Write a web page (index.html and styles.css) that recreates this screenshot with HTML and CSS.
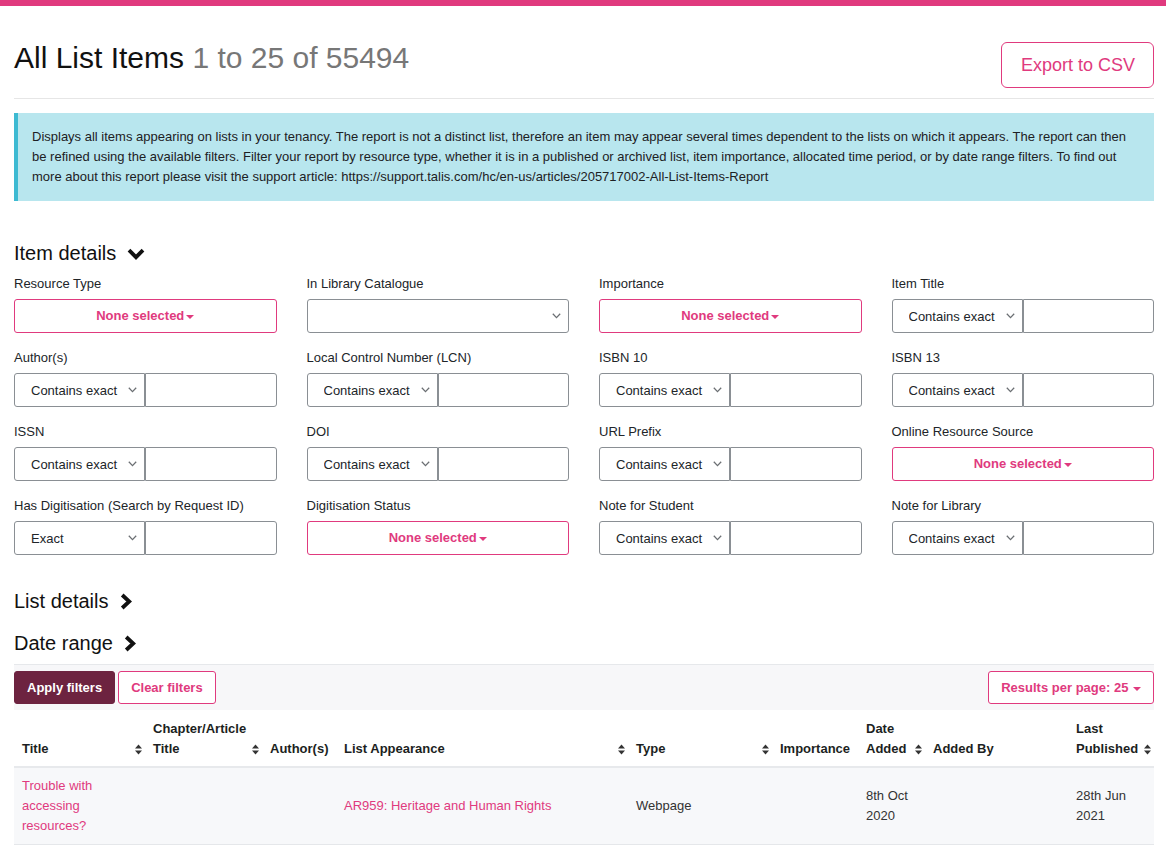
FILE: index.html
```html
<!DOCTYPE html>
<html lang="en">
<head>
<meta charset="utf-8">
<title>All List Items</title>
<link rel="stylesheet" href="styles.css">
</head>
<body>
<div class="topbar"></div>
<main class="container">
  <header class="page-header">
    <h1 class="page-title">All List Items <span class="count">1 to 25 of 55494</span></h1>
    <button class="btn-export" type="button">Export to CSV</button>
  </header>
  <hr class="rule">
  <div class="info">Displays all items appearing on lists in your tenancy. The report is not a distinct list, therefore an item may appear several times dependent to the lists on which it appears. The report can then be refined using the available filters. Filter your report by resource type, whether it is in a published or archived list, item importance, allocated time period, or by date range filters. To find out more about this report please visit the support article: https://support.talis.com/hc/en-us/articles/205717002-All-List-Items-Report</div>

  <h2 class="section-title section-first">Item details
    <svg class="chev-down" width="18" height="12" viewBox="0 0 18 12"><path d="M2 2.2 L9 9.2 L16 2.2" fill="none" stroke="#111" stroke-width="3.8"/></svg>
  </h2>

  <div class="filter-grid">
    <div class="field">
      <label class="field-label">Resource Type</label>
      <button class="multi" type="button">None selected<span class="caret"></span></button>
    </div>
    <div class="field">
      <label class="field-label">In Library Catalogue</label>
      <span class="select-wrap select-wrap-full">
        <select class="select select-full"><option></option></select>
        <svg class="select-arrow" width="9" height="6" viewBox="0 0 9 6"><path d="M0.8 0.8 L4.5 4.6 L8.2 0.8" fill="none" stroke="#6b6f73" stroke-width="1.3"/></svg>
      </span>
    </div>
    <div class="field">
      <label class="field-label">Importance</label>
      <button class="multi" type="button">None selected<span class="caret"></span></button>
    </div>
    <div class="field">
      <label class="field-label">Item Title</label>
      <div class="pair">
        <span class="select-wrap"><select class="select"><option>Contains exact</option></select><svg class="select-arrow" width="9" height="6" viewBox="0 0 9 6"><path d="M0.8 0.8 L4.5 4.6 L8.2 0.8" fill="none" stroke="#6b6f73" stroke-width="1.3"/></svg></span>
        <input class="text-input" type="text">
      </div>
    </div>

    <div class="field">
      <label class="field-label">Author(s)</label>
      <div class="pair">
        <span class="select-wrap"><select class="select"><option>Contains exact</option></select><svg class="select-arrow" width="9" height="6" viewBox="0 0 9 6"><path d="M0.8 0.8 L4.5 4.6 L8.2 0.8" fill="none" stroke="#6b6f73" stroke-width="1.3"/></svg></span>
        <input class="text-input" type="text">
      </div>
    </div>
    <div class="field">
      <label class="field-label">Local Control Number (LCN)</label>
      <div class="pair">
        <span class="select-wrap"><select class="select"><option>Contains exact</option></select><svg class="select-arrow" width="9" height="6" viewBox="0 0 9 6"><path d="M0.8 0.8 L4.5 4.6 L8.2 0.8" fill="none" stroke="#6b6f73" stroke-width="1.3"/></svg></span>
        <input class="text-input" type="text">
      </div>
    </div>
    <div class="field">
      <label class="field-label">ISBN 10</label>
      <div class="pair">
        <span class="select-wrap"><select class="select"><option>Contains exact</option></select><svg class="select-arrow" width="9" height="6" viewBox="0 0 9 6"><path d="M0.8 0.8 L4.5 4.6 L8.2 0.8" fill="none" stroke="#6b6f73" stroke-width="1.3"/></svg></span>
        <input class="text-input" type="text">
      </div>
    </div>
    <div class="field">
      <label class="field-label">ISBN 13</label>
      <div class="pair">
        <span class="select-wrap"><select class="select"><option>Contains exact</option></select><svg class="select-arrow" width="9" height="6" viewBox="0 0 9 6"><path d="M0.8 0.8 L4.5 4.6 L8.2 0.8" fill="none" stroke="#6b6f73" stroke-width="1.3"/></svg></span>
        <input class="text-input" type="text">
      </div>
    </div>

    <div class="field">
      <label class="field-label">ISSN</label>
      <div class="pair">
        <span class="select-wrap"><select class="select"><option>Contains exact</option></select><svg class="select-arrow" width="9" height="6" viewBox="0 0 9 6"><path d="M0.8 0.8 L4.5 4.6 L8.2 0.8" fill="none" stroke="#6b6f73" stroke-width="1.3"/></svg></span>
        <input class="text-input" type="text">
      </div>
    </div>
    <div class="field">
      <label class="field-label">DOI</label>
      <div class="pair">
        <span class="select-wrap"><select class="select"><option>Contains exact</option></select><svg class="select-arrow" width="9" height="6" viewBox="0 0 9 6"><path d="M0.8 0.8 L4.5 4.6 L8.2 0.8" fill="none" stroke="#6b6f73" stroke-width="1.3"/></svg></span>
        <input class="text-input" type="text">
      </div>
    </div>
    <div class="field">
      <label class="field-label">URL Prefix</label>
      <div class="pair">
        <span class="select-wrap"><select class="select"><option>Contains exact</option></select><svg class="select-arrow" width="9" height="6" viewBox="0 0 9 6"><path d="M0.8 0.8 L4.5 4.6 L8.2 0.8" fill="none" stroke="#6b6f73" stroke-width="1.3"/></svg></span>
        <input class="text-input" type="text">
      </div>
    </div>
    <div class="field">
      <label class="field-label">Online Resource Source</label>
      <button class="multi" type="button">None selected<span class="caret"></span></button>
    </div>

    <div class="field">
      <label class="field-label">Has Digitisation (Search by Request ID)</label>
      <div class="pair">
        <span class="select-wrap"><select class="select"><option>Exact</option></select><svg class="select-arrow" width="9" height="6" viewBox="0 0 9 6"><path d="M0.8 0.8 L4.5 4.6 L8.2 0.8" fill="none" stroke="#6b6f73" stroke-width="1.3"/></svg></span>
        <input class="text-input" type="text">
      </div>
    </div>
    <div class="field">
      <label class="field-label">Digitisation Status</label>
      <button class="multi" type="button">None selected<span class="caret"></span></button>
    </div>
    <div class="field">
      <label class="field-label">Note for Student</label>
      <div class="pair">
        <span class="select-wrap"><select class="select"><option>Contains exact</option></select><svg class="select-arrow" width="9" height="6" viewBox="0 0 9 6"><path d="M0.8 0.8 L4.5 4.6 L8.2 0.8" fill="none" stroke="#6b6f73" stroke-width="1.3"/></svg></span>
        <input class="text-input" type="text">
      </div>
    </div>
    <div class="field">
      <label class="field-label">Note for Library</label>
      <div class="pair">
        <span class="select-wrap"><select class="select"><option>Contains exact</option></select><svg class="select-arrow" width="9" height="6" viewBox="0 0 9 6"><path d="M0.8 0.8 L4.5 4.6 L8.2 0.8" fill="none" stroke="#6b6f73" stroke-width="1.3"/></svg></span>
        <input class="text-input" type="text">
      </div>
    </div>
  </div>

  <h2 class="section-title section-list">List details
    <svg class="chev-right" width="12" height="17" viewBox="0 0 12 17"><path d="M2.2 2 L9.2 8.5 L2.2 15" fill="none" stroke="#111" stroke-width="3.8"/></svg>
  </h2>
  <h2 class="section-title section-date">Date range
    <svg class="chev-right" width="12" height="17" viewBox="0 0 12 17"><path d="M2.2 2 L9.2 8.5 L2.2 15" fill="none" stroke="#111" stroke-width="3.8"/></svg>
  </h2>

  <div class="toolbar">
    <button class="btn btn-apply" type="button">Apply filters</button>
    <button class="btn btn-clear" type="button">Clear filters</button>
    <button class="btn btn-results" type="button">Results per page: 25 <span class="caret"></span></button>
  </div>

  <table class="report">
    <colgroup>
      <col class="w-title"><col class="w-chapter"><col class="w-author"><col class="w-list"><col class="w-type"><col class="w-importance"><col class="w-date"><col class="w-addedby"><col class="w-published">
    </colgroup>
    <thead>
      <tr>
        <th><div class="th-inner"><span>Title</span><svg class="sort" width="7" height="11" viewBox="0 0 7 11"><path d="M0 4.6 L3.5 0.6 L7 4.6 Z M0 6.4 L7 6.4 L3.5 10.4 Z" fill="#333"/></svg></div></th>
        <th><div class="th-inner"><span>Chapter/Article Title</span><svg class="sort" width="7" height="11" viewBox="0 0 7 11"><path d="M0 4.6 L3.5 0.6 L7 4.6 Z M0 6.4 L7 6.4 L3.5 10.4 Z" fill="#333"/></svg></div></th>
        <th><div class="th-inner"><span>Author(s)</span></div></th>
        <th><div class="th-inner"><span>List Appearance</span><svg class="sort" width="7" height="11" viewBox="0 0 7 11"><path d="M0 4.6 L3.5 0.6 L7 4.6 Z M0 6.4 L7 6.4 L3.5 10.4 Z" fill="#333"/></svg></div></th>
        <th><div class="th-inner"><span>Type</span><svg class="sort" width="7" height="11" viewBox="0 0 7 11"><path d="M0 4.6 L3.5 0.6 L7 4.6 Z M0 6.4 L7 6.4 L3.5 10.4 Z" fill="#333"/></svg></div></th>
        <th><div class="th-inner"><span>Importance</span></div></th>
        <th><div class="th-inner"><span>Date Added</span><svg class="sort" width="7" height="11" viewBox="0 0 7 11"><path d="M0 4.6 L3.5 0.6 L7 4.6 Z M0 6.4 L7 6.4 L3.5 10.4 Z" fill="#333"/></svg></div></th>
        <th><div class="th-inner"><span>Added By</span></div></th>
        <th><div class="th-inner"><span>Last Published</span><svg class="sort" width="7" height="11" viewBox="0 0 7 11"><path d="M0 4.6 L3.5 0.6 L7 4.6 Z M0 6.4 L7 6.4 L3.5 10.4 Z" fill="#333"/></svg></div></th>
      </tr>
    </thead>
    <tbody>
      <tr>
        <td><a href="#">Trouble with accessing resources?</a></td>
        <td></td>
        <td></td>
        <td><a href="#">AR959: Heritage and Human Rights</a></td>
        <td>Webpage</td>
        <td></td>
        <td>8th Oct 2020</td>
        <td></td>
        <td>28th Jun 2021</td>
      </tr>
    </tbody>
  </table>
</main>
</body>
</html>
```

FILE: styles.css
```css
* { box-sizing: border-box; }

body {
  margin: 0;
  font-family: "Liberation Sans", Arial, Helvetica, sans-serif;
  font-size: 13px;
  line-height: 20px;
  color: #212529;
  background: #fff;
}

.topbar {
  height: 6px;
  background: #e03a7e;
}

.container {
  width: 1140px;
  margin-left: 14px;
}

.page-header {
  display: flex;
  justify-content: space-between;
  align-items: flex-start;
  margin-top: 36px;
}

.page-title {
  margin: -2px 0 0;
  font-size: 30px;
  line-height: 36px;
  font-weight: 400;
  color: #111;
}

.count {
  color: #777;
}

.btn-export {
  font-family: inherit;
  font-size: 18px;
  line-height: 24px;
  padding: 10px 18px 10px 19px;
  border: 1px solid #e03a7e;
  border-radius: 6px;
  background: #fff;
  color: #e03a7e;
}

.rule {
  margin: 10px 0 0;
  height: 0;
  border: 0;
  border-top: 1px solid #e6e6e6;
}

.info {
  margin-top: 14px;
  padding: 14px 18px 14px 14px;
  background: #b8e6ee;
  border-left: 4px solid #3dbad2;
  color: #1d2124;
}

.section-title {
  display: flex;
  align-items: center;
  gap: 11px;
  margin: 0 0 6px;
  font-size: 20px;
  line-height: 28px;
  font-weight: 400;
  color: #111;
}

.section-first { margin-top: 38px; }
.section-list { margin-top: 32px; gap: 11px; }
.section-date { margin-top: 14px; gap: 11px; margin-bottom: 0; }

.chev-down { margin-top: 1px; }

.filter-grid {
  display: grid;
  grid-template-columns: repeat(4, 1fr);
  column-gap: 30px;
  row-gap: 14px;
}

.field-label {
  display: block;
  margin-bottom: 6px;
  padding-top: 1px;
  line-height: 19px;
  color: #212529;
}

.multi {
  display: block;
  width: 100%;
  height: 34px;
  padding: 0 12px;
  border: 1px solid #e03a7e;
  border-radius: 3px;
  background: #fff;
  color: #e03a7e;
  font-family: inherit;
  font-size: 13px;
  font-weight: 700;
  line-height: 20px;
  text-align: center;
}

.caret {
  display: inline-block;
  width: 0;
  height: 0;
  margin-left: 2px;
  vertical-align: middle;
  border-top: 4px solid currentColor;
  border-left: 4px solid transparent;
  border-right: 4px solid transparent;
}

.pair {
  display: flex;
}

.select-wrap {
  position: relative;
  display: block;
  flex: 0 0 50%;
  width: 50%;
}

.select-wrap-full {
  width: 100%;
}

.select {
  display: block;
  width: 100%;
  height: 34px;
  padding: 0 22px 0 16px;
  -webkit-appearance: none;
  appearance: none;
  border: 1px solid #8a8f94;
  border-radius: 3px 0 0 3px;
  background: #fff;
  color: #212529;
  font-family: inherit;
  font-size: 13px;
}

.select-full {
  border-radius: 3px;
}

.select-arrow {
  position: absolute;
  right: 8px;
  top: 14px;
  pointer-events: none;
}

.text-input {
  flex: 0 0 50%;
  width: 50%;
  min-width: 0;
  height: 34px;
  padding: 1px 6px;
  border: 1px solid #8a8f94;
  border-radius: 0 3px 3px 0;
  background: #fff;
  font-family: inherit;
  font-size: 13px;
}

.toolbar {
  display: flex;
  align-items: center;
  gap: 3px;
  margin-top: 7px;
  padding: 6px 0;
  border-top: 1px solid #e6e8eb;
  background: #f7f7f9;
}

.btn {
  font-family: inherit;
  font-size: 13px;
  font-weight: 700;
  line-height: 19px;
  padding: 6px 12px;
  border: 1px solid;
  border-radius: 3px;
}

.btn-apply {
  background: #6d2340;
  border-color: #6d2340;
  color: #fff;
}

.btn-clear {
  background: #fff;
  border-color: #e03a7e;
  color: #e03a7e;
}

.btn-results {
  margin-left: auto;
  background: #fff;
  border-color: #e03a7e;
  color: #e03a7e;
}

.btn-results .caret {
  margin-left: 1px;
}

.report {
  width: 1140px;
  table-layout: fixed;
  border-collapse: collapse;
}

.w-title { width: 131px; }
.w-chapter { width: 117px; }
.w-author { width: 74px; }
.w-list { width: 292px; }
.w-type { width: 144px; }
.w-importance { width: 86px; }
.w-date { width: 67px; }
.w-addedby { width: 143px; }
.w-published { width: 86px; }

.report th {
  padding: 9px 3px 7px 8px;
  text-align: left;
  vertical-align: bottom;
  font-weight: 700;
  color: #1c1f22;
  border-bottom: 2px solid #e7e9ec;
}

.th-inner {
  display: flex;
  align-items: flex-end;
  justify-content: space-between;
  gap: 4px;
}

.sort {
  flex: none;
  margin-bottom: 4px;
}

.report td {
  padding: 8px;
  vertical-align: middle;
  background: #f7f8fa;
  border-bottom: 1px solid #e5e7ea;
  color: #333;
}

.report td a {
  color: #e03a7e;
  text-decoration: none;
}
```
